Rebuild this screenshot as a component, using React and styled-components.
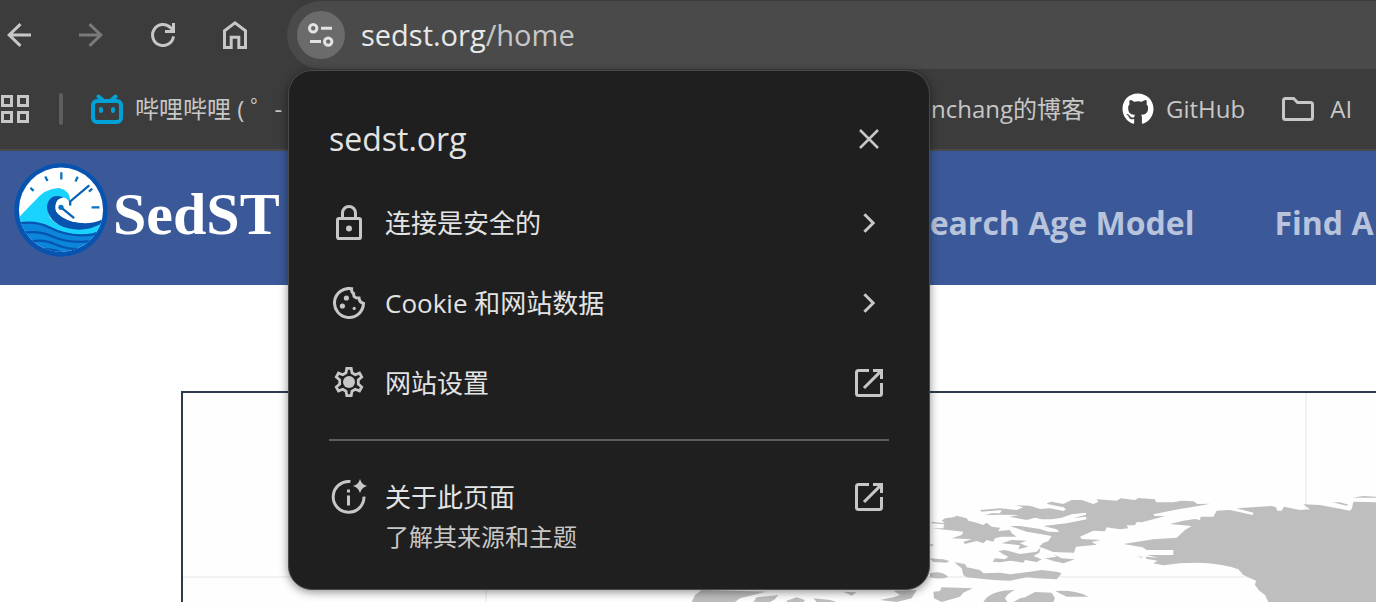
import React from "react";
import styled, { createGlobalStyle } from "styled-components";
import { FaGithub } from "react-icons/fa";

const GlobalStyle = createGlobalStyle`
  * {
    box-sizing: border-box;
  }

  body {
    margin: 0;
    background-color: white;
    font-family: "Open Sans", "Noto Sans CJK SC", sans-serif;
  }

  button {
    padding: 0;
    border: none;
    background: none;
    color: inherit;
    font: inherit;
    text-align: left;
  }

  svg {
    display: block;
    flex-shrink: 0;
  }
`;

const Browser = styled.div`
  position: relative;
  display: flex;
  flex-direction: column;
  height: 100vh;
  overflow: hidden;
`;

const Toolbar = styled.div`
  flex-shrink: 0;
  display: flex;
  align-items: center;
  gap: 48px;
  height: 70px;
  padding-left: 7px;
  background-color: #3c3c3c;
  color: #c7c7c7;
`;

const ToolButton = styled.button`
  flex-shrink: 0;
  color: ${(props) => (props.disabled ? "#7a7a7a" : "#c7c7c7")};
`;

const Omnibox = styled.div`
  flex: 1;
  display: flex;
  align-items: center;
  gap: 16px;
  height: 68px;
  margin-left: -8px;
  padding-left: 10px;
  border-radius: 34px 0 0 34px;
  background-color: #4a4a4a;
`;

const SiteInfo = styled.button`
  display: flex;
  align-items: center;
  justify-content: center;
  width: 48px;
  height: 48px;
  border-radius: 50%;
  background-color: #6b6b6b;
  color: #e3e3e3;
`;

const Address = styled.div`
  font-size: 29px;
  line-height: 40px;
  color: #c7c7c7;
`;

const Host = styled.span`
  color: #e8e8e8;
`;

const Bookmarks = styled.nav`
  flex-shrink: 0;
  display: flex;
  align-items: center;
  height: 81px;
  padding: 0 0 2px 1px;
  border-bottom: 2px solid #494949;
  background-color: #3c3c3c;
  color: #c7c7c7;
  overflow: hidden;
`;

const Separator = styled.span`
  flex-shrink: 0;
  width: 4px;
  height: 32px;
  margin: 0 28px 0 30px;
  border-radius: 2px;
  background-color: #5e5e5e;
`;

const Bookmark = styled.a`
  flex-shrink: 0;
  display: flex;
  align-items: center;
  gap: ${(props) => props.$gap || 12}px;
  width: ${(props) => (props.$width ? `${props.$width}px` : "auto")};
  margin-right: 37px;
  color: #c7c7c7;
  font-size: 24px;
  line-height: 32px;
  text-decoration: none;
  white-space: pre;
`;

const Header = styled.header`
  flex-shrink: 0;
  display: flex;
  align-items: center;
  height: 134px;
  background-color: #3b5998;
  overflow: hidden;
`;

const Brand = styled.a`
  flex-shrink: 0;
  display: flex;
  align-items: center;
  gap: 5px;
  width: 912px;
  padding: 0 0 16px 14px;
  color: white;
  text-decoration: none;
`;

const Wordmark = styled.span`
  padding-top: 8px;
  font-family: "Liberation Serif", serif;
  font-size: 60px;
  font-weight: bold;
  line-height: 72px;
`;

const Menu = styled.nav`
  display: flex;
  gap: 80px;
  padding-top: 10px;
`;

const MenuLink = styled.a`
  color: #b8c3dc;
  font-size: 32px;
  font-weight: bold;
  line-height: 44px;
  text-decoration: none;
  white-space: nowrap;
`;

const MapFrame = styled.main`
  flex: 1;
  min-height: 0;
  margin: 106px 0 0 181px;
  border: solid #2c3a4f;
  border-width: 2px 0 0 2px;
  background-color: #fefefe;
  overflow: hidden;
`;

const Popup = styled.section`
  position: absolute;
  top: 70px;
  left: 288px;
  width: 642px;
  padding: 32px 40px;
  border: 1px solid #4a4a4a;
  border-radius: 24px;
  background-color: #1f1f1f;
  color: #e3e3e3;
  box-shadow: 0 2px 10px rgba(0, 0, 0, 0.45);
`;

const PopupHeader = styled.div`
  display: flex;
  align-items: center;
  justify-content: space-between;
  height: 72px;
  margin-bottom: 8px;
`;

const PopupTitle = styled.h1`
  margin: 0;
  font-size: 32px;
  font-weight: normal;
  line-height: 44px;
`;

const IconBox = styled.span`
  display: flex;
  align-items: center;
  justify-content: center;
  width: 40px;
  height: 40px;
  color: #c7c7c7;
`;

const Row = styled.button`
  display: grid;
  grid-template-columns: 40px 1fr 40px;
  column-gap: 16px;
  align-content: center;
  width: 100%;
  height: 80px;
`;

const Label = styled.span`
  font-size: 26px;
  line-height: 40px;
`;

const SubLabel = styled.span`
  grid-column: 2;
  color: #c7c7c7;
  font-size: 24px;
  line-height: 40px;
`;

const Divider = styled.hr`
  height: 2px;
  margin: 16px 0 36px;
  border: none;
  background-color: #5e5e5e;
`;

const Stroke = ({ width, height, weight = 3, children, ...rest }) => (
  <svg
    width={width}
    height={height}
    viewBox={`0 0 ${width} ${height}`}
    fill="none"
    stroke="currentColor"
    strokeWidth={weight}
    aria-hidden="true"
    {...rest}
  >
    {children}
  </svg>
);

const BackIcon = () => (
  <Stroke width={24} height={24}>
    <path d="M24 12H2M13.5 1.2L2.2 12l11.3 10.8" />
  </Stroke>
);

const ForwardIcon = () => (
  <Stroke width={24} height={24}>
    <path d="M0 12h22M10.5 1.2L21.8 12 10.5 22.8" />
  </Stroke>
);

const ReloadIcon = () => (
  <Stroke width={24} height={24}>
    <path d="M22.5 13.4A10.5 10.5 0 1 1 19.500 4.600L22.6 8" />
    <path d="M22.5 0v8.5H14" />
  </Stroke>
);

const HomeIcon = () => (
  <Stroke width={24} height={28}>
    <path d="M1.5 26.4V9.800L12 1.9l10.5 7.900v16.6h-6.700V16.2H8.2v10.2z" />
  </Stroke>
);

const TuneIcon = () => (
  <Stroke width={26} height={24}>
    <circle cx="5.2" cy="5.2" r="3.7" />
    <path d="M13 5.2h11M2 18.6h11" />
    <circle cx="20.2" cy="18.6" r="3.7" />
  </Stroke>
);

const AppsIcon = () => (
  <Stroke width={28} height={28}>
    <path d="M1.5 1.5h9v9h-9zM17.5 1.5h9v9h-9zM1.5 17.5h9v9h-9zM17.5 17.5h9v9h-9z" />
  </Stroke>
);

const BilibiliIcon = () => (
  <Stroke width={32} height={30} weight={4} color="#00a1d6" strokeLinecap="round">
    <path d="M7.5 2.5l4.5 4M24.5 2.5l-4.5 4" />
    <rect x="2" y="7" width="28" height="21" rx="4" />
    <path d="M10 15v2M22 15v2" />
  </Stroke>
);

const FolderIcon = () => (
  <Stroke width={32} height={24}>
    <path d="M3.5 1.5h8.100l4 4h12.9q2 0 2 2v13q0 2-2 2h-25q-2 0-2-2v-17q0-2 2-2z" />
  </Stroke>
);

const CloseIcon = () => (
  <Stroke width={20} height={20} weight={2.5}>
    <path d="M1 1l18 18M19 1L1 19" />
  </Stroke>
);

const ChevronIcon = () => (
  <Stroke width={12} height={20}>
    <path d="M1.4 1.2l8.8 8.8-8.8 8.8" />
  </Stroke>
);

const LaunchIcon = () => (
  <Stroke width={28} height={28}>
    <path d="M14 1.5H3.5q-2 0-2 2v21q0 2 2 2h21q2 0 2-2V14" />
    <path d="M18 1.5h8.5V10M26.4 1.6L9 19" />
  </Stroke>
);

const LockIcon = () => (
  <Stroke width={26} height={36}>
    <path d="M6.5 13V8a6.500 6.500 0 0 1 13 0V13" />
    <rect x="1.5" y="13.5" width="23" height="20" rx="1.6" />
    <circle cx="13" cy="23.5" r="3" fill="currentColor" stroke="none" />
  </Stroke>
);

const CookieIcon = () => (
  <Stroke width={32} height={32}>
    <path d="M18.6 1.7A14.5 14.5 0 1 0 30.5 16.4Q26.4 15.4 26 11 20.4 11.4 20.6 6.600 18 4.800 18.600 1.700z" />
    <g fill="currentColor" stroke="none">
      <circle cx="13.4" cy="11" r="2.6" />
      <circle cx="9.4" cy="19" r="2.6" />
      <circle cx="21.2" cy="21.4" r="1.6" />
    </g>
  </Stroke>
);

const GearIcon = () => (
  <Stroke width={32} height={32} weight={2.8}>
    <path d="M13.8 1.4h4.4l.8 4.400 3.200 1.900 4.300-1.600 2.200 3.900-3.400 2.900v4.200l3.400 2.900-2.200 3.900-4.300-1.600-3.200 1.900-.8 4.400h-4.4l-.8-4.400-3.200-1.900-4.300 1.600-2.200-3.900 3.400-2.900v-4.200l-3.400-2.900 2.200-3.900 4.300 1.600 3.200-1.900z" />
    <circle cx="16" cy="15" r="6" fill="currentColor" stroke="none" />
  </Stroke>
);

const AboutIcon = () => (
  <Stroke width={36} height={36}>
    <path d="M19.4 2.6A15.4 15.4 0 1 0 33 17.6" />
    <path d="M17.5 10.6v3M17.5 16.4v10" />
    <path
      d="M29 0q1.600 5.600 7 7-5.400 1.400-7 7-1.600-5.600-7-7 5.400-1.400 7-7z"
      fill="currentColor"
      stroke="none"
    />
  </Stroke>
);

const Logo = () => (
  <svg width="94" height="96" viewBox="10 8 286 292" aria-hidden="true">
    <defs>
      <clipPath id="dial">
        <circle cx="153" cy="153" r="128" />
      </clipPath>
    </defs>
    <circle cx="153" cy="154" r="142" fill="#0754b0" />
    <circle cx="153" cy="153" r="128" fill="white" />
    <g clipPath="url(#dial)">
      <path
        d="M20 182Q50 150 70 130 105 86 148 87 183 94 181 134 150 108 124 128 106 150 120 178 150 212 210 210 260 204 290 186V240H20z"
        fill="#19d3fd"
      />
      <path
        d="M181 134Q158 104 128 114 104 130 113 160 130 210 210 214 255 212 290 186L280 182Q240 202 190 190 150 178 138 158 130 122 160 116 174 118 181 134z"
        fill="#0754b0"
      />
      <path
        d="M181 134Q174 118 160 116 130 122 138 158 150 178 190 190L215 192V134z"
        fill="white"
      />
      <path d="M20 196Q75 186 115 206 180 240 250 226L290 214V300H20z" fill="#0b86da" />
      <path
        d="M20 196Q75 186 115 206 180 240 250 228L290 214M25 226Q80 214 125 234 190 262 270 244M50 252Q95 240 135 258 180 280 250 270M80 276Q120 266 170 290"
        fill="none"
        stroke="#0754b0"
        strokeWidth="7"
      />
    </g>
    <g fill="none" stroke="#0b72bd" strokeWidth="7">
      <path d="M154 39v22M105 52l7 14M204 53l-7 14M60 87l10 9M248 89l-10 9M246 146h24" />
      <path d="M239 79L181 128v12M153 146l40 33" stroke="#0b62b4" />
    </g>
    <circle cx="153" cy="146" r="8" fill="#0b72bd" />
  </svg>
);

const WorldMap = () => (
  <svg width="1193" height="209" viewBox="183 393 1193 209" role="img" aria-label="World map">
    <path d="M1306 393v209M486 393v209M183 577h1193" stroke="#f2f2f2" strokeWidth="2" />
    <g fill="#bebebe" transform="translate(920 490) scale(0.33333)">
      <path d="M380 40L395 35 430 42 455 30 485 30 520 42 535 36 530 28 590 32 602 25 645 30 655 24 705 28 708 37 760 37 785 32 820 34 832 42 870 41 835 48 775 58 730 67 700 73 703 78 735 78 700 88 665 97 650 96 645 106 620 106 625 115 600 118 560 112 555 124 520 122 480 140 485 147 542 150 515 156 530 164 468 170 462 188 400 186 375 176 358 170 368 160 385 153 395 138 365 133 320 125 270 108 300 108 360 117 385 125 418 126 410 118 370 108 440 100 500 88 498 80 460 84 498 74 498 68 455 73 425 83 395 88 365 88 345 83 320 90 268 80 298 75 240 74 195 76 215 70 240 70 245 60 185 65 180 60 240 55 290 60 310 52 288 46 330 47 360 57 390 55 430 63 438 58 430 52 385 43z" />
      <path d="M35 95L75 100 65 92 75 85 100 82 110 77 140 85 145 92 170 98 190 105 200 98 215 110 240 113 235 123 270 120 275 130 290 140 245 140 225 145 220 155 200 150 190 160 170 153 135 162 130 155 155 148 95 145 125 135 130 125 35 115 70 115 72 103 35 100z" />
      <path d="M245 160L275 150 320 152 300 160 325 170 295 178 300 166z" />
      <path d="M235 183L255 180 300 192 350 185 362 172 358 188 340 198 365 208 350 216 315 210 310 218 270 212 240 217 218 215 225 205 255 208 265 200 250 193z" />
      <path d="M375 205L410 200 400 193 425 205 465 208 430 220 400 213zM28 160L42 165 35 170zM28 205L70 208 88 213 80 218 40 216z" />
      <path d="M103 217L135 222 140 232 180 240 190 250 240 248 270 253 330 245 365 240 410 245 425 250 410 268 350 265 320 262 270 272 220 270 140 262 130 255 125 235z" />
      <path d="M30 250Q60 240 85 260 65 270 30 262z" />
      <path d="M40 305L60 303 65 292 158 295 130 308 120 320 65 336 42 325zM190 336Q210 300 285 300 262 310 255 325L262 336zM280 336L300 325 315 322 345 306 395 308 405 325 400 336zM405 303Q470 300 505 320L440 320z" />
      <path d="M-685 336L-675 315-655 300-460 305-540 325-555 336zM-500 336L-490 322-425 315-435 328-450 336zM-400 332L-370 322-345 330-350 336-400 336zM-320 325L-270 330-250 336-310 336zM-230 305L-190 307-205 317zM-120 330L-80 322-60 315-80 302-10 300-25 325-70 336z" />
      <path d="M750 102L790 92 825 87 840 90 842 80 880 80 890 62 930 60 998 75 1000 68 950 55 1055 48 1068 52 1072 62 1085 62 1092 50 1140 60 1170 58 1150 43 1200 45 1290 62 1296 55 1300 35 1368 37V336H1045L1035 315 1018 302 1005 285 1008 272 970 255 955 238Q900 218 830 218L780 220 730 226 700 220 713 212 678 206 678 200 715 203 680 195 760 195 760 180 680 180 668 172 610 162 700 148 770 143 795 120 815 108 780 105z" />
      <path d="M1238 37L1260 37 1285 44 1280 47zM1297 23L1330 18 1368 20V23zM650 200L668 200 666 203z" />
    </g>
  </svg>
);

const settings = [
  { label: "连接是安全的", icon: <LockIcon />, trailing: <ChevronIcon /> },
  { label: "Cookie 和网站数据", icon: <CookieIcon />, trailing: <ChevronIcon /> },
  { label: "网站设置", icon: <GearIcon />, trailing: <LaunchIcon /> },
];

export default () => {
  return (
    <Browser>
      <GlobalStyle />
      <Toolbar>
        <ToolButton aria-label="Back">
          <BackIcon />
        </ToolButton>
        <ToolButton aria-label="Forward" disabled>
          <ForwardIcon />
        </ToolButton>
        <ToolButton aria-label="Reload">
          <ReloadIcon />
        </ToolButton>
        <ToolButton aria-label="Home">
          <HomeIcon />
        </ToolButton>
        <Omnibox>
          <SiteInfo aria-label="Site information">
            <TuneIcon />
          </SiteInfo>
          <Address>
            <Host>sedst.org</Host>/home
          </Address>
        </Omnibox>
      </Toolbar>
      <Bookmarks>
        <ToolButton aria-label="Apps">
          <AppsIcon />
        </ToolButton>
        <Separator />
        <Bookmark href="#bilibili" $width={803}>
          <BilibiliIcon />
          哔哩哔哩 ( ゜-
        </Bookmark>
        <Bookmark href="#blog">nchang的博客</Bookmark>
        <Bookmark href="#github">
          <FaGithub size={32} color="white" />
          GitHub
        </Bookmark>
        <Bookmark href="#ai" $gap={16}>
          <FolderIcon />
          AI
        </Bookmark>
      </Bookmarks>
      <Header>
        <Brand href="#home">
          <Logo />
          <Wordmark>SedST</Wordmark>
        </Brand>
        <Menu>
          <MenuLink href="#search">Search Age Model</MenuLink>
          <MenuLink href="#find">Find A</MenuLink>
        </Menu>
      </Header>
      <MapFrame>
        <WorldMap />
      </MapFrame>
      <Popup aria-label="sedst.org">
        <PopupHeader>
          <PopupTitle>sedst.org</PopupTitle>
          <button aria-label="Close">
            <IconBox>
              <CloseIcon />
            </IconBox>
          </button>
        </PopupHeader>
        {settings.map((item) => (
          <Row key={item.label}>
            <IconBox>{item.icon}</IconBox>
            <Label>{item.label}</Label>
            <IconBox>{item.trailing}</IconBox>
          </Row>
        ))}
        <Divider />
        <Row>
          <IconBox>
            <AboutIcon />
          </IconBox>
          <Label>关于此页面</Label>
          <IconBox>
            <LaunchIcon />
          </IconBox>
          <SubLabel>了解其来源和主题</SubLabel>
        </Row>
      </Popup>
    </Browser>
  );
};
